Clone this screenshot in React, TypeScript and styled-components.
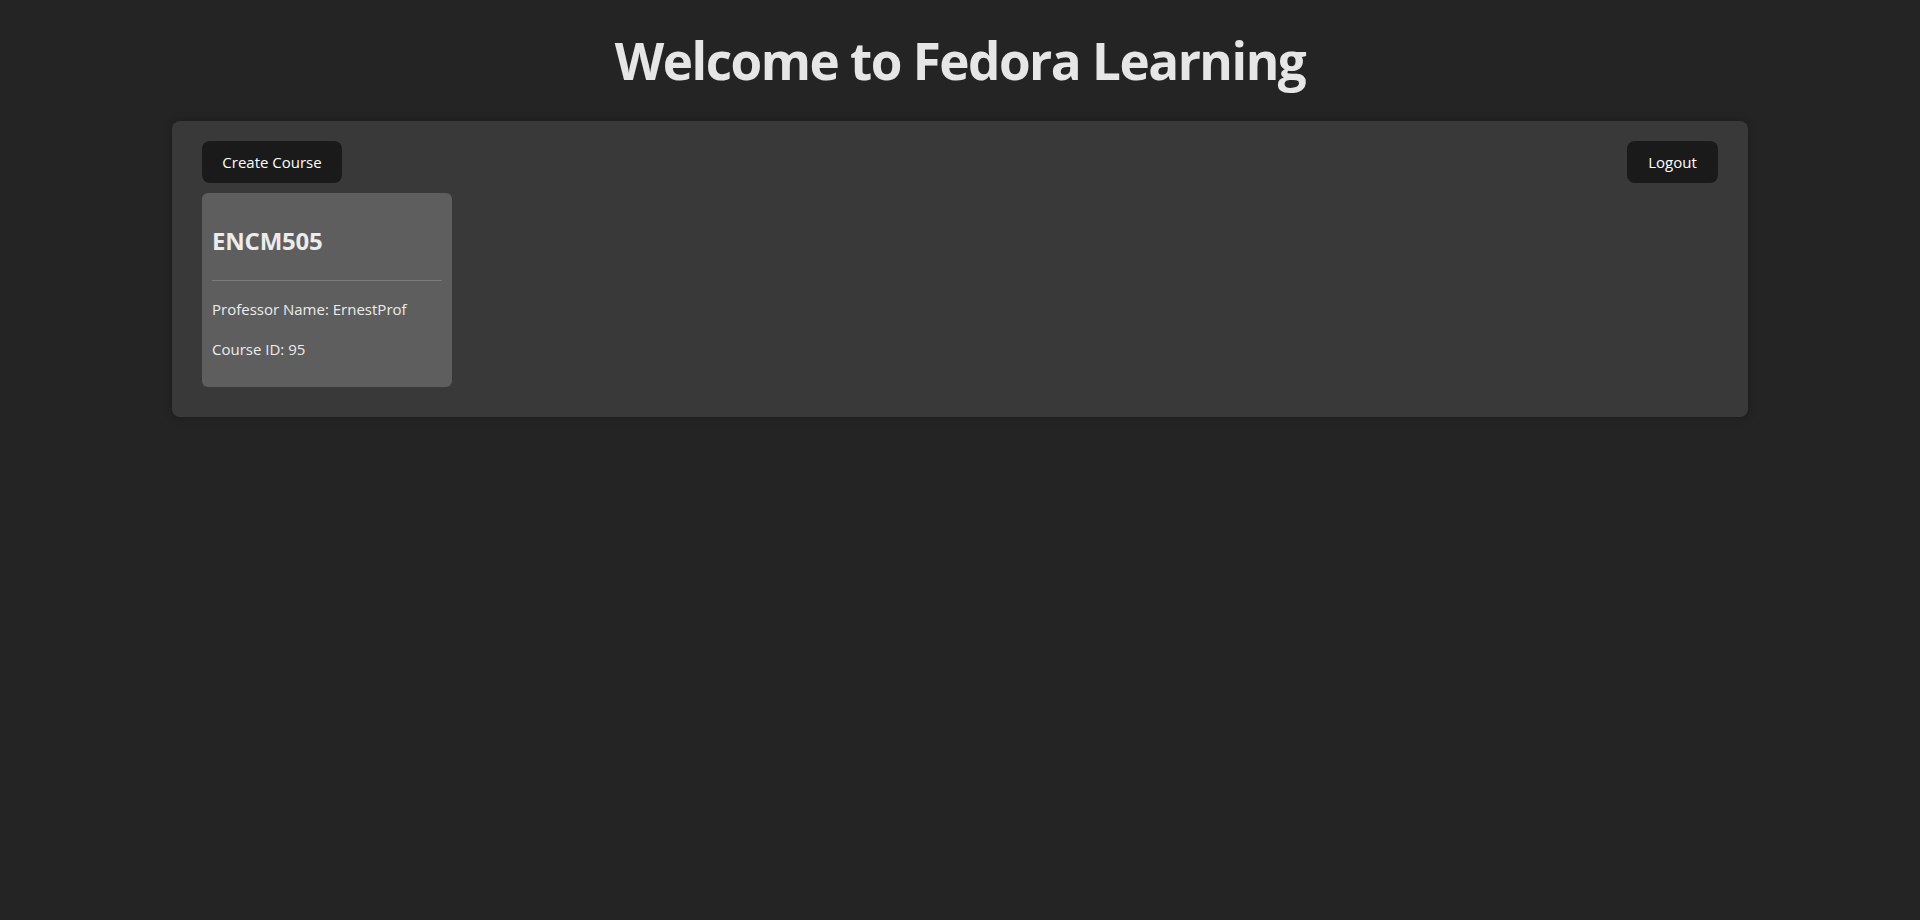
import React from "react";
import styled, { createGlobalStyle } from "styled-components";

const GlobalStyle = createGlobalStyle`
  html, body {
    margin: 0;
    padding: 0;
    background: #242424;
    color: rgba(255, 255, 255, 0.87);
    font-family: "Open Sans", "Noto Sans", sans-serif;
  }
  * { box-sizing: border-box; }
`;

const Page = styled.div`
  min-height: 100vh;
  display: flex;
  flex-direction: column;
  align-items: center;
`;

const Title = styled.h1`
  margin: 32px 0 33px;
  font-size: 51.2px;
  line-height: 56px;
  font-weight: 700;
  letter-spacing: -1.5px;
  color: #e6e6e6;
  text-align: center;
`;

const Panel = styled.section`
  width: 1576px;
  padding: 20px 30px 30px;
  background: #393939;
  border-radius: 8px;
  box-shadow: 0 0 10px rgba(0, 0, 0, 0.25);
  display: flex;
  flex-direction: column;
  gap: 10px;
`;

const Toolbar = styled.div`
  display: flex;
  justify-content: space-between;
  align-items: center;
`;

const Button = styled.button<{ $w: number }>`
  width: ${(p) => p.$w}px;
  height: 42px;
  padding: 0;
  border: 1px solid transparent;
  border-radius: 8px;
  background: #1a1a1a;
  color: #ffffff;
  font-family: "Open Sans", "Noto Sans", sans-serif;
  font-size: 15px;
  font-weight: 400;
  cursor: pointer;
`;

const CourseGrid = styled.div`
  display: flex;
  flex-wrap: wrap;
  gap: 20px;
`;

const Card = styled.div`
  width: 250px;
  padding: 10px 10px 26px;
  background: #5e5e5e;
  border-radius: 6px;
  display: flex;
  flex-direction: column;
`;

const CardTitle = styled.h2`
  margin: 22px 0 0;
  font-size: 24px;
  line-height: 32px;
  font-weight: 700;
  letter-spacing: -0.2px;
  color: #ececec;
`;

const Divider = styled.div`
  margin-top: 23px;
  height: 1px;
  background: #7c7c7c;
`;

const Info = styled.p`
  margin: 16px 0 0;
  font-size: 15px;
  line-height: 24px;
  color: #ececec;
`;

export default function App() {
  return (
    <>
      <GlobalStyle />
      <Page>
        <Title>Welcome to Fedora Learning</Title>
        <Panel>
          <Toolbar>
            <Button $w={140}>Create Course</Button>
            <Button $w={91}>Logout</Button>
          </Toolbar>
          <CourseGrid>
            <Card>
              <CardTitle>ENCM505</CardTitle>
              <Divider />
              <Info>Professor Name: ErnestProf</Info>
              <Info>Course ID: 95</Info>
            </Card>
          </CourseGrid>
        </Panel>
      </Page>
    </>
  );
}
